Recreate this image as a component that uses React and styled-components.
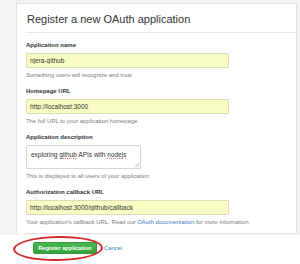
import React from 'react'
import styled, { createGlobalStyle } from 'styled-components'

const Global = createGlobalStyle`
  html, body {
    margin: 0;
    padding: 0;
    background: #f3f3f3;
    font-family: "Liberation Sans", Arial, sans-serif;
    -webkit-font-smoothing: antialiased;
  }
`

const Page = styled.div`
  width: 300px;
  height: 264px;
  overflow: hidden;
  background: #f3f3f3;
  padding-top: 3px;
  box-sizing: border-box;
`

const Card = styled.div`
  margin-left: 16px;
  width: 281px;
  background: #fff;
  border: 1px solid #e2e2e2;
  border-bottom: none;
  box-sizing: border-box;
  padding-left: 9px;
`

const Header = styled.div`
  padding: 8px 0 6px 1px;
  border-bottom: 1px solid #e6e6e6;
`

const Title = styled.h2`
  margin: 0;
  font-size: 11px;
  line-height: 14px;
  font-weight: normal;
  color: #333;
`

const Body = styled.div`
  padding: 8px 0 7px 0;
  border-bottom: 1px solid #e6e6e6;
`

const Field = styled.div`
  margin-bottom: ${p => (p.$last ? 0 : '8.5px')};
`

const Label = styled.div`
  font-size: 6px;
  line-height: 8px;
  font-weight: bold;
  color: #333;
  margin-bottom: 3.5px;
`

const Input = styled.input`
  display: block;
  box-sizing: border-box;
  width: 203px;
  height: 15px;
  margin: 0;
  padding: 0 3px;
  border: 1px solid #dcdcb8;
  border-radius: 1px;
  background: #f8fdc4;
  font-family: "Liberation Sans", Arial, sans-serif;
  font-size: 6.5px;
  color: #333;
  outline: none;
`

const Area = styled.div`
  position: relative;
  box-sizing: border-box;
  width: 115px;
  height: 24px;
  border: 1px solid #d6d6d6;
  border-radius: 1px;
  background: #fff;
  padding: 5px 4px;
  font-size: 6.5px;
  line-height: 8px;
  color: #333;
`

const Misspelled = styled.span`
  text-decoration: underline dotted #e07070;
  text-decoration-thickness: 0.6px;
  text-underline-offset: 1px;
`

const Grip = styled.svg`
  position: absolute;
  right: 1px;
  bottom: 1px;
`

const Hint = styled.div`
  margin-top: 3px;
  font-size: 5.9px;
  line-height: 8px;
  color: #7a7a7a;
  white-space: nowrap;
`

const Link = styled.a`
  color: #4078c0;
  text-decoration: none;
`

const Footer = styled.div`
  display: flex;
  align-items: center;
  background: #fff;
  border-bottom: 1px solid #e2e2e2;
  padding: 7px 0 12px 33px;
  margin-top: 1px;
`

const ButtonWrap = styled.div`
  position: relative;
  display: flex;
`

const Button = styled.button`
  height: 12px;
  width: 64px;
  padding: 0;
  border: 1px solid #3a9a3f;
  border-radius: 2px;
  background: linear-gradient(#49b54f, #34a43b);
  color: #fff;
  font-family: "Liberation Sans", Arial, sans-serif;
  font-size: 5.6px;
  font-weight: bold;
  white-space: nowrap;
`

const Ring = styled.span`
  position: absolute;
  left: -20px;
  top: -6px;
  width: 86px;
  height: 21px;
  border: 2.5px solid #d42a2a;
  border-radius: 50%;
  transform: rotate(-1deg);
  pointer-events: none;
`

const Cancel = styled(Link)`
  margin-left: 7px;
  font-size: 5.8px;
`

export default function App() {
  return (
    <>
      <Global />
      <Page>
        <Card>
          <Header>
            <Title>Register a new OAuth application</Title>
          </Header>
          <Body>
            <Field>
              <Label>Application name</Label>
              <Input readOnly value="njera-github" />
              <Hint>Something users will recognize and trust</Hint>
            </Field>
            <Field>
              <Label>Homepage URL</Label>
              <Input readOnly value="http://localhost:3000" />
              <Hint>The full URL to your application homepage</Hint>
            </Field>
            <Field>
              <Label>Application description</Label>
              <Area>
                exploring <Misspelled>github</Misspelled> APIs with <Misspelled>nodejs</Misspelled>
                <Grip width="5" height="5" viewBox="0 0 5 5">
                  <path d="M1 5 L5 1 M3 5 L5 3" stroke="#999" strokeWidth="0.6" />
                </Grip>
              </Area>
              <Hint>This is displayed to all users of your application</Hint>
            </Field>
            <Field $last>
              <Label>Authorization callback URL</Label>
              <Input readOnly value="http://localhost:3000/github/callback" />
              <Hint>
                Your application's callback URL. Read our <Link>OAuth documentation</Link> for more information.
              </Hint>
            </Field>
          </Body>
        </Card>
        <Footer>
          <ButtonWrap>
            <Button>Register application</Button>
            <Ring />
          </ButtonWrap>
          <Cancel>Cancel</Cancel>
        </Footer>
      </Page>
    </>
  )
}
